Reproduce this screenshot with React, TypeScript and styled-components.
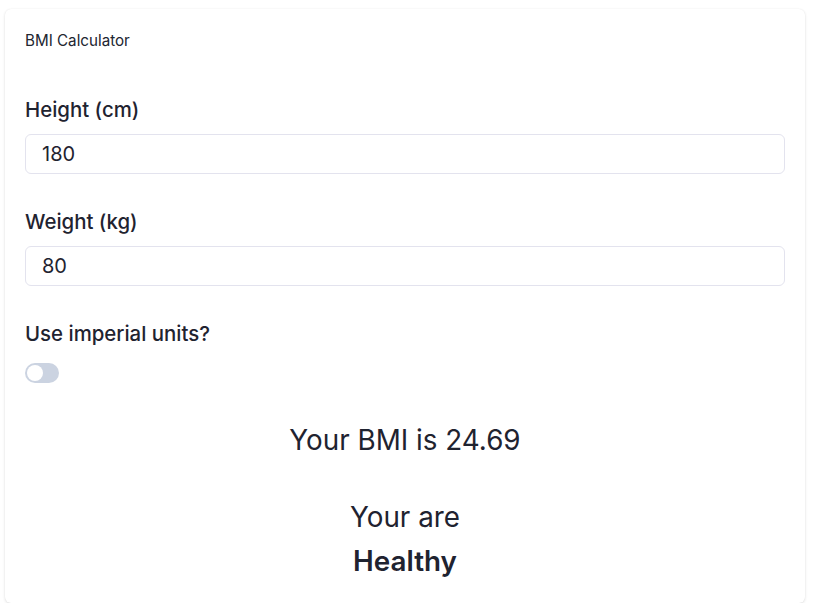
import React, { useState } from "react";
import styled, { createGlobalStyle } from "styled-components";

const GlobalStyle = createGlobalStyle`
  * {
    box-sizing: border-box;
  }
  body {
    margin: 0;
    padding: 9px 15px 0 5px;
    background: #ffffff;
    font-family: Inter, "Noto Sans", sans-serif;
    color: #1f2330;
  }
`;

const Card = styled.div`
  width: 800px;
  height: 594px;
  padding: 21px 20px 20px;
  background: #ffffff;
  border-radius: 6px;
  box-shadow: 0 1px 3px rgba(0, 0, 0, 0.12), 0 0 1px rgba(0, 0, 0, 0.08);
  display: flex;
  flex-direction: column;
`;

const Title = styled.h1`
  margin: 0;
  font-size: 15.2px;
  line-height: 22px;
  font-weight: 400;
  color: #222631;
`;

const Field = styled.div<{ $top: number }>`
  display: flex;
  flex-direction: column;
  gap: 10px;
  margin-top: ${(p) => p.$top}px;
`;

const Label = styled.label`
  font-size: 20.4px;
  line-height: 28px;
  font-weight: 500;
  color: #1f2330;
`;

const Input = styled.input`
  height: 40px;
  width: 100%;
  padding: 0 16px;
  border: 1px solid #e3e3ee;
  border-radius: 6px;
  font-family: inherit;
  font-size: 20px;
  color: #1f2330;
  background: #ffffff;
  outline: none;
`;

const Toggle = styled.button<{ $on: boolean }>`
  position: relative;
  width: 34px;
  height: 20px;
  margin-top: 5px;
  padding: 0;
  border: none;
  border-radius: 10px;
  background: ${(p) => (p.$on ? "#6366f1" : "#cbd3e1")};
  cursor: pointer;

  &::after {
    content: "";
    position: absolute;
    top: 2px;
    left: ${(p) => (p.$on ? "16px" : "2px")};
    width: 16px;
    height: 16px;
    border-radius: 50%;
    background: #ffffff;
  }
`;

const Result = styled.div`
  display: flex;
  flex-direction: column;
  align-items: center;
  margin-top: 39px;
`;

const ResultLine = styled.p<{ $top?: number; $bold?: boolean }>`
  margin: ${(p) => p.$top ?? 0}px 0 0;
  font-size: 27.8px;
  line-height: 36px;
  font-weight: ${(p) => (p.$bold ? 600 : 400)};
  color: #1f2330;
`;

export default function App() {
  const [height, setHeight] = useState("180");
  const [weight, setWeight] = useState("80");
  const [imperial, setImperial] = useState(false);

  const h = parseFloat(height) / 100;
  const w = parseFloat(weight);
  const bmi = h > 0 ? w / (h * h) : 0;

  return (
    <>
      <GlobalStyle />
      <Card>
        <Title>BMI Calculator</Title>
        <Field $top={44}>
          <Label>Height (cm)</Label>
          <Input value={height} onChange={(e) => setHeight(e.target.value)} />
        </Field>
        <Field $top={34}>
          <Label>Weight (kg)</Label>
          <Input value={weight} onChange={(e) => setWeight(e.target.value)} />
        </Field>
        <Field $top={34}>
          <Label>Use imperial units?</Label>
          <Toggle $on={imperial} onClick={() => setImperial(!imperial)} />
        </Field>
        <Result>
          <ResultLine>Your BMI is {bmi.toFixed(2)}</ResultLine>
          <ResultLine $top={41}>Your are</ResultLine>
          <ResultLine $top={8} $bold>
            Healthy
          </ResultLine>
        </Result>
      </Card>
    </>
  );
}
